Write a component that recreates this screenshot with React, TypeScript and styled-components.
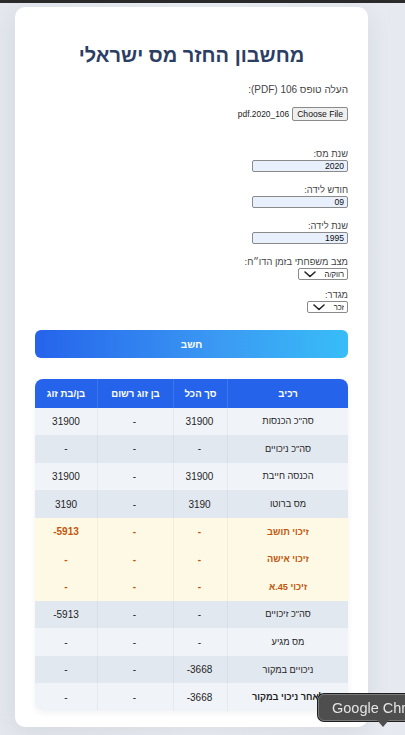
import styled, { createGlobalStyle } from "styled-components";

const GlobalStyle = createGlobalStyle`
  html, body {
    margin: 0;
    padding: 0;
  }
  body {
    background: #e8ecf1;
    font-family: "Liberation Sans", Arial, "DejaVu Sans", sans-serif;
    overflow: hidden;
  }
`;

type Row = {
  label: string;
  total: string;
  spouse: string;
  partner: string;
  credit?: boolean;
  strong?: boolean;
};

const rows: Row[] = [
  { label: 'סה"כ הכנסות', total: "31900", spouse: "-", partner: "31900" },
  { label: 'סה"כ ניכויים', total: "-", spouse: "-", partner: "-" },
  { label: "הכנסה חייבת", total: "31900", spouse: "-", partner: "31900" },
  { label: "מס ברוטו", total: "3190", spouse: "-", partner: "3190" },
  { label: "זיכוי תושב", total: "-", spouse: "-", partner: "-5913", credit: true },
  { label: "זיכוי אישה", total: "-", spouse: "-", partner: "-", credit: true },
  { label: "זיכוי 45.א", total: "-", spouse: "-", partner: "-", credit: true },
  { label: 'סה"כ זיכויים', total: "-", spouse: "-", partner: "-5913" },
  { label: "מס מגיע", total: "-", spouse: "-", partner: "-" },
  { label: "ניכויים במקור", total: "-3668", spouse: "-", partner: "-" },
  { label: "לאחר ניכוי במקור", total: "-3668", spouse: "-", partner: "-", strong: true },
];

function Chevron() {
  return (
    <svg width="12" height="7" viewBox="0 0 12 7">
      <polyline points="1,1 6,5.5 11,1" fill="none" stroke="#222" strokeWidth="1.6" strokeLinecap="round" strokeLinejoin="round" />
    </svg>
  );
}

function App() {
  return (
    <Page>
      <GlobalStyle />
      <Card dir="rtl">
        <Title>מחשבון החזר מס ישראלי</Title>
        <UploadLabel>העלה טופס 106 (PDF):</UploadLabel>
        <FileRow>
          <FileButton type="button">Choose File</FileButton>
          <FileName>106_2020.pdf</FileName>
        </FileRow>

        <Field $top={27}>
          <FieldLabel>שנת מס:</FieldLabel>
          <TextInput defaultValue="2020" />
        </Field>
        <Field $top={12}>
          <FieldLabel>חודש לידה:</FieldLabel>
          <TextInput defaultValue="09" />
        </Field>
        <Field $top={12}>
          <FieldLabel>שנת לידה:</FieldLabel>
          <TextInput defaultValue="1995" />
        </Field>
        <Field $top={12}>
          <FieldLabel>מצב משפחתי בזמן הדו״ח:</FieldLabel>
          <SelectBox $width={50}>
            <Select defaultValue="single">
              <option value="single">רווק/ה</option>
              <option value="married">נשוי/אה</option>
            </Select>
            <Chevron />
          </SelectBox>
        </Field>
        <Field $top={9}>
          <FieldLabel>מגדר:</FieldLabel>
          <SelectBox $width={41}>
            <Select defaultValue="male">
              <option value="male">זכר</option>
              <option value="female">נקבה</option>
            </Select>
            <Chevron />
          </SelectBox>
        </Field>

        <CalcButton type="button">חשב</CalcButton>

        <Table>
          <colgroup>
            <col style={{ width: 121 }} />
            <col style={{ width: 54 }} />
            <col style={{ width: 76 }} />
            <col style={{ width: 62 }} />
          </colgroup>
          <thead>
            <tr>
              <Th>רכיב</Th>
              <Th>סך הכל</Th>
              <Th>בן זוג רשום</Th>
              <Th>בן/בת זוג</Th>
            </tr>
          </thead>
          <tbody>
            {rows.map((r) => (
              <Tr key={r.label} $credit={r.credit}>
                <LabelCell $strong={r.strong}>{r.label}</LabelCell>
                <NumCell>{r.total}</NumCell>
                <NumCell>{r.spouse}</NumCell>
                <NumCell>{r.partner}</NumCell>
              </Tr>
            ))}
          </tbody>
        </Table>
      </Card>
      <Tooltip>Google Chrome</Tooltip>
    </Page>
  );
}

export default App;

const Page = styled.div`
  min-height: 735px;
  box-sizing: border-box;
  border-top: 3px solid #2b2b2b;
  padding: 4px 0 0 15px;
  background: linear-gradient(90deg, #e4e8ee 0%, #eceff4 50%, #e6eaf0 100%);
`;

const Card = styled.div`
  width: 353px;
  box-sizing: border-box;
  background: #fff;
  border-radius: 10px;
  padding: 35px 20px 16px;
  box-shadow: 0 6px 24px rgba(30, 41, 59, 0.09);
`;

const Title = styled.h1`
  margin: 0;
  font-size: 20px;
  line-height: 26px;
  font-weight: 700;
  text-align: center;
  color: #2c3e64;
`;

const UploadLabel = styled.div`
  margin-top: 15px;
  font-size: 10px;
  line-height: 13px;
  color: #444;
`;

const FileRow = styled.div`
  margin-top: 11px;
  display: flex;
  align-items: center;
  gap: 3px;
  height: 14px;
`;

const FileButton = styled.button`
  height: 14px;
  box-sizing: border-box;
  padding: 0 4px;
  font-family: inherit;
  font-size: 8.6px;
  line-height: 12px;
  color: #111;
  background: #efefef;
  border: 1px solid #8a8a8a;
  border-radius: 2px;
`;

const FileName = styled.span`
  font-size: 8.4px;
  color: #222;
`;

const Field = styled.div<{ $top: number }>`
  margin-top: ${(p) => p.$top}px;
  display: flex;
  flex-direction: column;
  align-items: flex-start;
`;

const FieldLabel = styled.label`
  font-size: 9.3px;
  line-height: 12px;
  color: #444;
`;

const TextInput = styled.input`
  width: 96px;
  height: 12px;
  box-sizing: border-box;
  margin: 0;
  padding: 0 3px;
  font-family: inherit;
  font-size: 8.6px;
  color: #111;
  background: #e8f0fe;
  border: 1px solid #8a8a8a;
  border-radius: 2px;
  text-align: right;
`;

const SelectBox = styled.div<{ $width: number }>`
  width: ${(p) => p.$width}px;
  height: 12px;
  box-sizing: border-box;
  display: flex;
  align-items: center;
  justify-content: space-between;
  padding: 0 3px 0 5px;
  border: 1px solid #8a8a8a;
  border-radius: 2px;
  background: #fff;
`;

const Select = styled.select`
  appearance: none;
  border: none;
  background: transparent;
  padding: 0;
  margin: 0;
  font-family: inherit;
  font-size: 7.6px;
  color: #111;
  outline: none;
`;

const CalcButton = styled.button`
  display: block;
  width: 100%;
  height: 28px;
  margin-top: 17px;
  border: none;
  border-radius: 6px;
  background: linear-gradient(90deg, #2563eb 0%, #3b9bf3 60%, #38bdf8 100%);
  color: #fff;
  font-family: inherit;
  font-size: 10px;
  font-weight: 700;
`;

const Table = styled.table`
  width: 100%;
  margin-top: 21px;
  border-collapse: separate;
  border-spacing: 0;
  table-layout: fixed;
  border-radius: 8px;
  overflow: hidden;
  box-shadow: 0 2px 6px rgba(30, 41, 59, 0.06);
`;

const Th = styled.th`
  height: 28.5px;
  padding: 0;
  background: #2563eb;
  color: #fff;
  font-size: 9.6px;
  font-weight: 700;
  text-align: center;
  border-left: 1px solid rgba(255, 255, 255, 0.12);
  &:last-child {
    border-left: none;
  }
`;

const Tr = styled.tr<{ $credit?: boolean }>`
  background: #f0f4f9;
  &:nth-child(even) {
    background: #e2e8f0;
  }
  ${(p) =>
    p.$credit &&
    `
    &&, &&:nth-child(even) { background: #fef9e5; }
    td { color: #c2570c; font-weight: 700; }
  `}
`;

const Cell = styled.td`
  height: 27.6px;
  padding: 0;
  text-align: center;
  color: #1f1f1f;
  white-space: nowrap;
  border-left: 1px solid rgba(148, 163, 184, 0.12);
  &:last-child {
    border-left: none;
  }
`;

const LabelCell = styled(Cell)<{ $strong?: boolean }>`
  font-size: 9.2px;
  font-weight: ${(p) => (p.$strong ? 700 : 400)};
`;

const NumCell = styled(Cell)`
  font-size: 10px;
  direction: ltr;
`;

const Tooltip = styled.div`
  position: fixed;
  left: 318px;
  top: 694px;
  height: 27px;
  box-sizing: border-box;
  padding: 0 13px;
  display: flex;
  align-items: center;
  white-space: nowrap;
  background: #4e4e4e;
  border: 1px solid #7a7a7a;
  box-shadow: 0 0 0 1px #1e1e1e;
  border-radius: 6px;
  color: #e4e4e4;
  font-family: "Liberation Sans", Arial, sans-serif;
  font-size: 14.5px;
  &::after {
    content: "";
    position: absolute;
    left: 58px;
    bottom: -7px;
    width: 0;
    height: 0;
    border-left: 6px solid transparent;
    border-right: 6px solid transparent;
    border-top: 7px solid #4e4e4e;
  }
`;
